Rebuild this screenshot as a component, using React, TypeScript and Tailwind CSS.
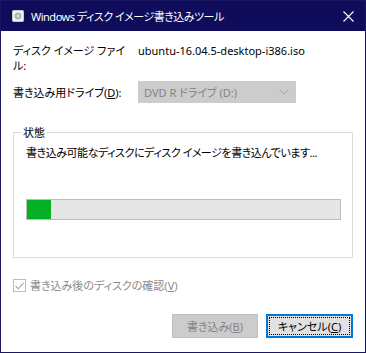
import React from 'react'

const FONT = "font-['Noto_Sans','Noto_Sans_CJK_JP',sans-serif] [font-feature-settings:'palt']"

function TitleBar() {
  return (
    <div className="flex h-[30px] items-center bg-[#0f0c5c] pl-[11px] pr-[10px] text-white">
      <svg width="12" height="12" viewBox="0 0 12 12" className="shrink-0">
        <rect x="0.5" y="0.5" width="11" height="11" rx="1" fill="#f2f2f2" stroke="#c8c8c8" />
        <circle cx="6" cy="6" r="3.5" fill="#b4b4b4" />
        <circle cx="6" cy="6" r="1" fill="#f2f2f2" />
      </svg>
      <span className="ml-[7px] text-[11px] leading-none tracking-[-0.5px]">
        Windows ディスク イメージ書き込みツール
      </span>
      <svg width="11" height="11" viewBox="0 0 11 11" className="ml-auto mr-[1px]">
        <path d="M0.5 0.5 L10.5 10.5 M10.5 0.5 L0.5 10.5" stroke="#fff" strokeWidth="1.1" />
      </svg>
    </div>
  )
}

function Chevron() {
  return (
    <svg width="10" height="6" viewBox="0 0 10 6">
      <path d="M0.5 0.5 L5 5 L9.5 0.5" fill="none" stroke="#a6a6a6" strokeWidth="1" />
    </svg>
  )
}

export default function App() {
  return (
    <div
      className={`${FONT} flex h-[353px] w-[366px] flex-col border border-[#1a1760] bg-white text-[11px] leading-[15px] text-black`}
    >
      <TitleBar />

      <div className="flex flex-1 flex-col px-3 pt-[12px]">
        <div className="grid grid-cols-[125px_1fr]">
          <span className="whitespace-nowrap">
            ディスク イメージ ファイ
            <br />
            ル:
          </span>
          <span>ubuntu-16.04.5-desktop-i386.iso</span>
        </div>

        <div className="mt-[8px] grid grid-cols-[125px_158px] items-center">
          <span className="whitespace-nowrap">
            書き込み用ドライブ(<u>D</u>):
          </span>
          <div className="flex h-[22px] items-center border border-[#cccccc] bg-[#cccccc] pl-[5px] pr-[6px] text-[#838383]">
            <span>DVD R ドライブ (D:)</span>
            <span className="ml-auto flex">
              <Chevron />
            </span>
          </div>
        </div>

        <div className="relative mt-[29px] h-[126px] border border-[#dcdcdc] pl-[12px] pt-[12px]">
          <span className="absolute left-[7px] top-[-8px] bg-white px-[2px]">状態</span>
          <p className="whitespace-nowrap tracking-[-0.45px]">
            書き込み可能なディスクにディスク イメージを書き込んでいます...
          </p>
          <div className="mt-[39px] flex h-[21px] w-[315px] border border-[#bcbcbc] bg-[#e6e6e6]">
            <div className="w-[24px] bg-[#06b025]" />
          </div>
        </div>

        <label className="mt-[20px] flex items-center text-[#8a8a8a]">
          <span className="flex h-[13px] w-[13px] items-center justify-center border border-[#bcbcbc] bg-white">
            <svg width="9" height="8" viewBox="0 0 9 8">
              <path d="M0.5 4 L3.3 6.8 L8.5 0.8" fill="none" stroke="#a0a0a0" strokeWidth="1.1" />
            </svg>
          </span>
          <span className="ml-[4px]">
            書き込み後のディスクの確認(<u>V</u>)
          </span>
        </label>

        <div className="mt-[21px] flex justify-end gap-[8px]">
          <button
            type="button"
            disabled
            className="flex h-[24px] w-[86px] items-center justify-center border border-[#bfbfbf] bg-[#cccccc] text-[#838383]"
          >
            書き込み(<u>B</u>)
          </button>
          <button
            type="button"
            className="flex h-[24px] w-[87px] items-center justify-center border-2 border-[#0078d7] bg-[#e1e1e1] p-[1px]"
          >
            <span className="flex h-full w-full items-center justify-center outline outline-1 outline-dotted outline-black [outline-offset:-1px]">
              キャンセル(<u>C</u>)
            </span>
          </button>
        </div>
      </div>
    </div>
  )
}
